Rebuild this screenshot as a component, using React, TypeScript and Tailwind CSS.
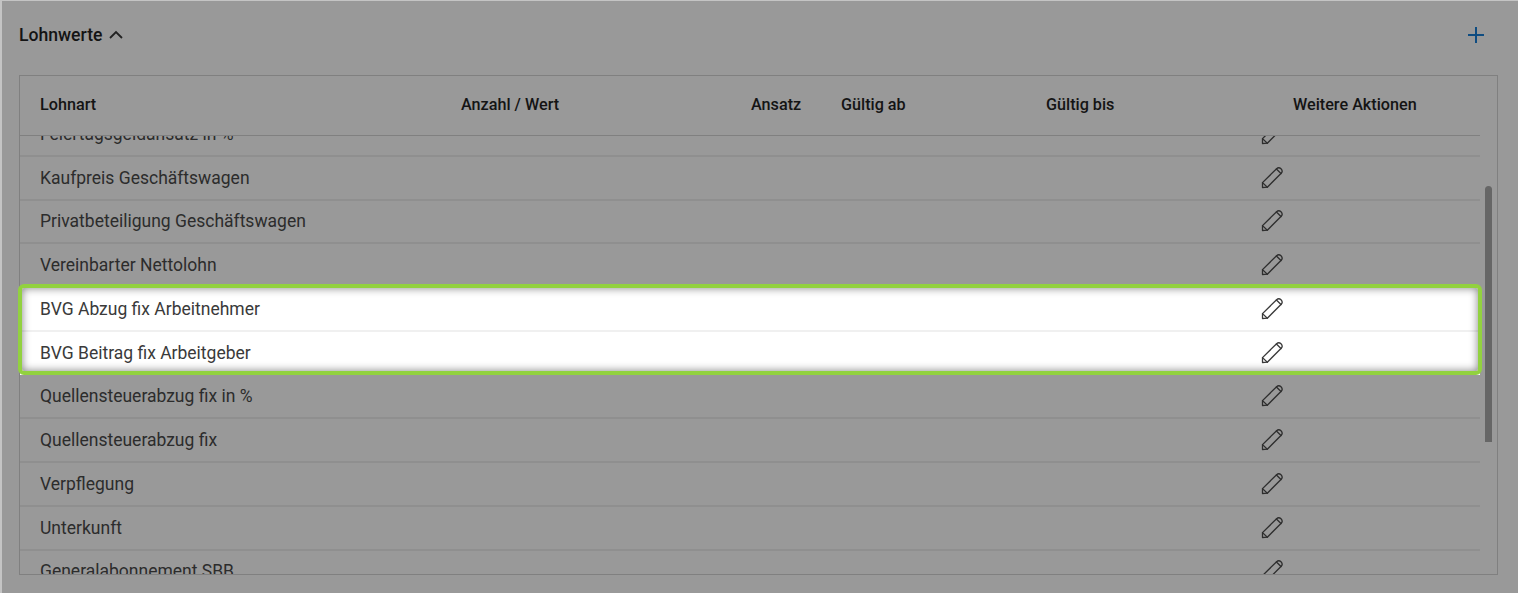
const rowsBefore = ["Feiertagsgeldansatz in %", "Kaufpreis Geschäftswagen", "Privatbeteiligung Geschäftswagen", "Vereinbarter Nettolohn"];
const highlighted = ["BVG Abzug fix Arbeitnehmer", "BVG Beitrag fix Arbeitgeber"];
const rowsAfter = ["Quellensteuerabzug fix in %", "Quellensteuerabzug fix", "Verpflegung", "Unterkunft", "Generalabonnement SBB"];

function PencilIcon({ dark }: { dark?: boolean }) {
  return (
    <svg className="-mt-[1px]" width="23" height="23" viewBox="0 0 23 23" fill="none" stroke={dark ? "#3a3a3a" : "#2e2e2e"} strokeWidth="1.3" strokeLinejoin="round" strokeLinecap="round">
      <path d="M1.5 21.5V16.6L15.6 2.7C16.8 1.6 18.6 1.5 20 2.8C21.4 4.2 21.4 6 20.2 7.3L6.3 21.2Z" />
      <path d="M15.4 3L20 7.5" />
      <path d="M1.5 16.6L6.3 21.2" />
    </svg>
  );
}

function Row({ label, light, last }: { label: string; light?: boolean; last?: boolean }) {
  return (
    <div className={`flex shrink-0 items-center pl-5 ${light ? "h-[43.5px]" : "h-[43.75px]"} ${last ? "" : light ? "border-b-2 border-[#f0f0f0]" : "border-b-2 border-[#8f8f8f]"}`}>
      <span className={`w-[1221px] text-[17.5px] ${light ? "text-[#3a3a3a]" : "text-[#2c2c2c]"}`}>{label}</span>
      <PencilIcon dark={light} />
    </div>
  );
}

export default function App() {
  return (
    <div className="h-[593px] w-[1518px] overflow-hidden border-l-2 border-t border-[#c4c4c4] bg-[#999999] pl-[17px] pr-[20px] font-['Roboto',sans-serif]">
      <div className="flex h-[74px] items-center justify-between pb-[6px]">
        <div className="flex items-center gap-[7px]">
          <span className="text-[17.6px] font-medium text-[#141414]">Lohnwerte</span>
          <svg width="14" height="9" viewBox="0 0 14 9" fill="none" stroke="#222" strokeWidth="1.8">
            <path d="M1 8L7 2L13 8" />
          </svg>
        </div>
        <svg className="mr-[13px]" width="18" height="18" viewBox="0 0 18 18" fill="none" stroke="#0f4c81" strokeWidth="2">
          <path d="M9 1V17M1 9H17" />
        </svg>
      </div>

      <div className="relative flex h-[500px] w-[1479px] flex-col border border-[#808080]">
        <div className="flex h-[60px] w-[1460px] shrink-0 items-center border-b border-[#808080] pl-5 pb-[1px] text-[16.2px] font-medium text-[#141414]">
          <span className="w-[421px]">Lohnart</span>
          <span className="w-[290px]">Anzahl / Wert</span>
          <span className="w-[90px]">Ansatz</span>
          <span className="w-[205px]">Gültig ab</span>
          <span className="w-[247px]">Gültig bis</span>
          <span>Weitere Aktionen</span>
        </div>
        <div className="flex min-h-0 flex-1">
          <div className="w-[1460px] overflow-y-clip">
            <div className="-mt-[23px] flex flex-col">
              {rowsBefore.map((r) => (
                <Row key={r} label={r} />
              ))}
              <div className="relative z-10 mb-[0.5px] bg-white">
                {highlighted.map((r, i) => (
                  <Row key={r} label={r} light last={i === 1} />
                ))}
                <div className="pointer-events-none absolute -inset-x-[2px] -top-[4px] bottom-0 rounded-[6px] border-[4px] border-[#92d13f] shadow-[inset_0_0_8px_rgba(0,0,0,0.5)]" />
              </div>
              {rowsAfter.map((r) => (
                <Row key={r} label={r} />
              ))}
            </div>
          </div>
          <div className="flex-1 pl-[5px] pt-[50px]">
            <div className="h-[256px] w-[7px] rounded-t-[4px] bg-[#666666]" />
          </div>
        </div>
      </div>
    </div>
  );
}
